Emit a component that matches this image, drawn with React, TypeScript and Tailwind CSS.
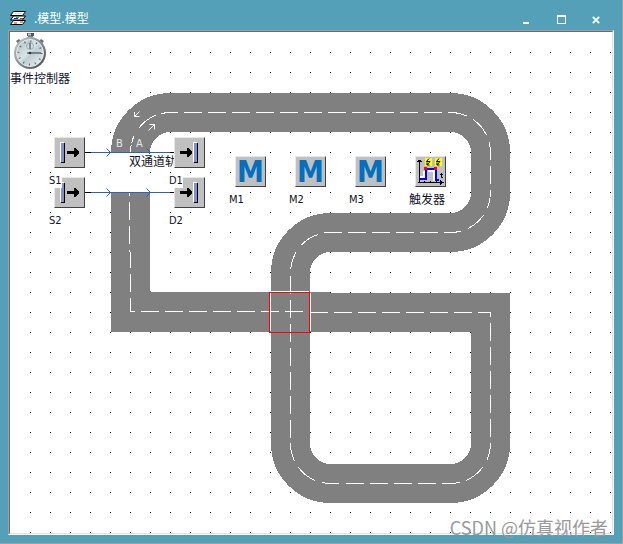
import type { ReactNode } from "react";

const LABEL_FONT =
  "font-['DejaVu_Sans_Condensed','Noto_Sans_CJK_SC',sans-serif]";
const CJK_FONT = "font-['Noto_Sans_CJK_SC','DejaVu_Sans',sans-serif]";

/* All model coordinates are canvas pixels; the grid pitch is 20. */

function TitleIcon() {
  return (
    <svg width="16" height="14" viewBox="0 0 16 14" aria-hidden="true">
      <g stroke="#000" strokeWidth="1" fill="#fff" strokeLinejoin="round">
        <path d="M3.5 9.5h12l-3 4H.5z" />
        <path d="M3.5 5h12l-3 4H.5z" />
        <path d="M3.5 .5h12l-3 4H.5z" />
      </g>
      <path d="M4 12h3m3-1h3" stroke="#d22" />
      <path d="M4 7.5h4" stroke="#22c" />
      <path d="M6 6.5h3" stroke="#0c3" />
      <path d="M10 7.5h3" stroke="#e22" />
      <path d="M5 2.5h7" stroke="#ddd" />
    </svg>
  );
}

function TitleBar() {
  const button = "flex h-5 w-[35px] items-center justify-center text-white";
  return (
    <header className="flex h-[30px] items-start justify-between pt-[9px]">
      <div className="flex items-center gap-2 pl-0.5">
        <TitleIcon />
        <h1 className={`text-[12px] leading-[18px] text-white ${CJK_FONT}`}>.模型.模型</h1>
      </div>
      <div className="flex">
        <button type="button" aria-label="最小化" className={button}>
          <svg width="9" height="9" aria-hidden="true">
            <rect x="1" y="7" width="6" height="2" fill="currentColor" />
          </svg>
        </button>
        <button type="button" aria-label="最大化" className={button}>
          <svg width="9" height="9" aria-hidden="true" shapeRendering="crispEdges">
            <path d="M0 0h9v9H0zM1 2v6h7V2z" fill="currentColor" fillRule="evenodd" />
          </svg>
        </button>
        <button type="button" aria-label="关闭" className={button}>
          <svg width="9" height="9" aria-hidden="true">
            <path d="M.8 1.800l6.400 6.400M7.200 1.800L.8 8.200" stroke="currentColor" strokeWidth="1.8" />
          </svg>
        </button>
      </div>
    </header>
  );
}

const LANE_MARKS: { d: string; dash: string }[] = [
  { d: "M120.5 120A40 40 0 0 1 160.5 80.5H162", dash: "7 2 8 9 21 6 17" },
  { d: "M160 80.5H168", dash: "8" },
  { d: "M174 80.5H438", dash: "18 6" },
  { d: "M438 80.5H440A40 40 0 0 1 480.5 120.5V128", dash: "19 7 21 8 18 9" },
  { d: "M480.5 134V158", dash: "18 6" },
  { d: "M480.5 158V160.5A40 40 0 0 1 440.5 200.5H434", dash: "18 8 21 8 20" },
  { d: "M428 200.5H332", dash: "18 6" },
  { d: "M332 200.5H320.5A40 40 0 0 0 280.5 240.5V244", dash: "18 6 20 9 18 7" },
  { d: "M280.5 244V411", dash: "18 6" },
  { d: "M280.5 411A40 40 0 0 0 320.5 451.5H330", dash: "19 7 21 8 17 9" },
  { d: "M336 451.5H432", dash: "18 6" },
  { d: "M432 451.5H440A40 40 0 0 0 480.5 411.5", dash: "18 6 22 8 18 9" },
  { d: "M480.5 405V280.5", dash: "18 6" },
  { d: "M300 280.5H481", dash: "18 6" },
  { d: "M131 279.5H293", dash: "18 6" },
  { d: "M120 279.5H125", dash: "5" },
  { d: "M119.5 161V164M119.5 170V188M119.5 194V212M119.5 218V220", dash: "none" },
  { d: "M120.5 220V236M120.5 242V260M120.5 266V280", dash: "none" },
];

function Track() {
  return (
    <svg className="block h-full w-full" role="img" aria-label="双通道轨道">
      <defs>
        <pattern id="grid" width="20" height="20" patternUnits="userSpaceOnUse">
          <rect width="1" height="1" fill="#000" />
        </pattern>
      </defs>
      <rect x="20" y="20" width="100%" height="100%" fill="url(#grid)" />
      <g fill="none" stroke="#808080" strokeWidth="39" shapeRendering="crispEdges">
        <path d="M120.5 120A40 40 0 0 1 160.5 80.5H440.5A40 40 0 0 1 480.5 120.5V160.5A40 40 0 0 1 440.5 200.5H320.5A40 40 0 0 0 280.5 240.5V411.5A40 40 0 0 0 320.5 451.5H440.5A40 40 0 0 0 480.5 411.5V280.5H320" />
        <path d="M320 280H120.5V161" strokeWidth="40" />
      </g>
      <path d="M140 161h2v98h-2z" fill="#fff" />
      <g fill="none" stroke="#fff" shapeRendering="crispEdges">
        {LANE_MARKS.map((mark) => (
          <path key={mark.d} d={mark.d} strokeDasharray={mark.dash} />
        ))}
        <path d="M261 259.5H299M260.5 261V299M300.5 261V299" />
      </g>
      <path d="M259.5 260.5H299.5V300.5H259.5z" fill="none" stroke="#f00" shapeRendering="crispEdges" />
      <g fill="none" stroke="#fff">
        <path d="M129.500 79.500L124.500 84.500M124.500 80V84.500H129.500" />
        <path d="M138.500 98.500L144.500 92.500M139.500 92.500H144.500V97.500" />
      </g>
      {[120.5, 160.5].map((y) => (
        <g key={y} fill="none" stroke="#000">
          <path d={`M75 ${y}H165`} />
          <g stroke="#2a60c8">
            <path d={`M81 ${y}H160`} />
            <path d={`M96.500 ${y - 4}L100.500 ${y}L96.500 ${y + 4}`} />
            <path d={`M136.500 ${y - 4}L140.500 ${y}L136.500 ${y + 4}`} />
          </g>
        </g>
      ))}
    </svg>
  );
}

function Tile({ children }: { children: ReactNode }) {
  return (
    <div className="flex h-[31px] w-[31px] items-center justify-center border border-t-[#e8e8e8] border-r-[#404040] border-b-[#404040] border-l-[#e8e8e8] bg-[#c0c0c0]">
      {children}
    </div>
  );
}

function PortIcon({ kind }: { kind: "source" | "drain" }) {
  const bar = kind === "source" ? 6 : 19;
  const arrow = kind === "source" ? 12 : 5;
  return (
    <svg width="29" height="29" shapeRendering="crispEdges" aria-hidden="true">
      <path d={`M${bar} 5h4v20h-4z`} fill="#000" />
      <path d={`M${bar - 1} 4h4v20h-4z`} fill="#fff" />
      <path d={`M${bar} 5h3v19h-3z`} fill="#7f8fd0" />
      <path d={`M${arrow} 13h7v-3h1l4 4v1l-4 4h-1v-3h-7z`} fill="#000" />
    </svg>
  );
}

function MethodIcon() {
  return (
    <span className="font-['DejaVu_Sans_Condensed','DejaVu_Sans',sans-serif] text-[30px] leading-[29px] font-bold text-[#0070c0]">
      M
    </span>
  );
}

function TriggerIcon() {
  return (
    <svg width="29" height="29" aria-hidden="true">
      <g shapeRendering="crispEdges">
        <path d="M9 1h7v8H9zM19 1h7v8h-7z" fill="#ff0" />
        <path d="M4 20H8V14M12 14H18V23H23" fill="none" stroke="#fff" strokeWidth="2" />
        <path d="M4 22H10V12H20V23H23" fill="none" stroke="#00f" strokeWidth="2" />
        <path d="M3 3h1v23H3zM2 25h24v1H2zM2 3h3v1H2zM1 4h5v1H1z" fill="#000" />
        <path d="M24 23h1v5h-1zM25 24h1v3h-1zM26 25h2v1h-2zM8 24h1v1H8zM14 24h1v1h-1zM20 24h1v1h-1z" fill="#000" />
        <path d="M8 10h3v3H8zM18 10h3v3h-3z" fill="#f00" />
      </g>
      <path d="M13 1.500L10.500 4.500H14L11 8M11 5.500V8H13.500M23 1.500L20.500 4.500H24L21 8M21 5.500V8H23.500" fill="none" stroke="#000" />
      <path d="M25.500 16V20.500H27M24 17.500H27" fill="none" stroke="#000" />
    </svg>
  );
}

function Stopwatch() {
  return (
    <svg width="34" height="38" viewBox="0 0 34 38" role="img" aria-label="事件控制器">
      <defs>
        <linearGradient id="rim" x1="0" y1="0" x2="1" y2="1">
          <stop offset="0" stopColor="#c8d0d2" />
          <stop offset=".5" stopColor="#859094" />
          <stop offset="1" stopColor="#414b4e" />
        </linearGradient>
        <linearGradient id="face" x1="0" y1="0" x2="1" y2="1">
          <stop offset="0" stopColor="#a9bcc2" />
          <stop offset=".45" stopColor="#d9e3e6" />
          <stop offset=".55" stopColor="#bdced4" />
          <stop offset="1" stopColor="#eef4f5" />
        </linearGradient>
      </defs>
      <path d="M15 2h5v5h-5z" fill="#7c8588" />
      <path d="M14 1h7v3h-7z" fill="#4f5a5d" />
      <path d="M15 1.500h3v2h-3z" fill="#c5cbcd" />
      <path d="M3 9l3-2 3 3-3 3zM31 9l-3-2-3 3 3 3z" fill="#687276" />
      <circle cx="17" cy="21" r="16" fill="url(#rim)" />
      <circle cx="17" cy="21" r="13.500" fill="url(#face)" stroke="#e5ebed" />
      <circle cx="17" cy="21" r="11.500" fill="none" stroke="#526165" strokeWidth="2" strokeDasharray="1 5.020" />
      <circle cx="17" cy="14" r="3.500" fill="none" stroke="#8b9b9f" strokeWidth=".7" />
      <path d="M17 11V17M14 21H28" stroke="#26363a" />
      <circle cx="17" cy="21" r="1.300" fill="#26363a" />
    </svg>
  );
}

type Place = { left: string; top: string };

const NODES: { name: string; tile: Place; label: Place; icon: ReactNode }[] = [
  { name: "S2", tile: { left: "left-[44px]", top: "top-[145px]" }, label: { left: "left-[39px]", top: "top-[181px]" }, icon: <PortIcon kind="source" /> },
  { name: "D2", tile: { left: "left-[164px]", top: "top-[145px]" }, label: { left: "left-[159px]", top: "top-[181px]" }, icon: <PortIcon kind="drain" /> },
  { name: "S1", tile: { left: "left-[44px]", top: "top-[105px]" }, label: { left: "left-[39px]", top: "top-[141px]" }, icon: <PortIcon kind="source" /> },
  { name: "D1", tile: { left: "left-[164px]", top: "top-[105px]" }, label: { left: "left-[159px]", top: "top-[141px]" }, icon: <PortIcon kind="drain" /> },
  { name: "M1", tile: { left: "left-[225px]", top: "top-[124px]" }, label: { left: "left-[219px]", top: "top-[160px]" }, icon: <MethodIcon /> },
  { name: "M2", tile: { left: "left-[285px]", top: "top-[124px]" }, label: { left: "left-[279px]", top: "top-[160px]" }, icon: <MethodIcon /> },
  { name: "M3", tile: { left: "left-[345px]", top: "top-[124px]" }, label: { left: "left-[339px]", top: "top-[160px]" }, icon: <MethodIcon /> },
  { name: "触发器", tile: { left: "left-[405px]", top: "top-[124px]" }, label: { left: "left-[399px]", top: "top-[160px]" }, icon: <TriggerIcon /> },
];

function NodeLabel({ text }: { text: string }) {
  const latin = /^[A-Z]/.test(text);
  return (
    <span
      className={`block bg-white whitespace-nowrap text-[#111128] ${
        latin ? `text-[11px] leading-[15px] ${LABEL_FONT}` : `text-[12px] leading-[14px] ${CJK_FONT}`
      }`}
    >
      {text}
    </span>
  );
}

function ModelCanvas() {
  return (
    <main className="relative h-full overflow-hidden bg-white">
      <Track />
      <span className={`absolute top-[104px] left-[106px] text-[11px] leading-[15px] text-[#e8e8e8] ${LABEL_FONT}`}>B</span>
      <span className={`absolute top-[104px] left-[126px] text-[11px] leading-[15px] text-[#e8e8e8] ${LABEL_FONT}`}>A</span>
      <div className="absolute top-[122px] left-[119px]">
        <NodeLabel text="双通道轨" />
      </div>
      <div className="absolute top-0 left-[3px]">
        <Stopwatch />
      </div>
      <div className="absolute top-[39px] left-0">
        <NodeLabel text="事件控制器" />
      </div>
      {NODES.map((node) => (
        <div key={node.name}>
          <div className={`absolute ${node.tile.left} ${node.tile.top}`}>
            <Tile>{node.icon}</Tile>
          </div>
          <div className={`absolute ${node.label.left} ${node.label.top}`}>
            <NodeLabel text={node.name} />
          </div>
        </div>
      ))}
    </main>
  );
}

export default function App() {
  return (
    <div className="relative flex h-screen flex-col border-r border-b border-[#a0a0a0] bg-[#54a0b8] px-2 pb-2">
      <TitleBar />
      <div className="min-h-0 flex-1 border border-t-[#a0a0a0] border-r-white border-b-white border-l-[#a0a0a0]">
        <div className="h-full border border-t-[#696969] border-r-[#e3e3e3] border-b-[#e3e3e3] border-l-[#696969]">
          <ModelCanvas />
        </div>
      </div>
      <span className={`absolute right-3.5 bottom-1 text-[18px] leading-6 text-[#999999] ${CJK_FONT}`}>
        CSDN @仿真视作者
      </span>
    </div>
  );
}
